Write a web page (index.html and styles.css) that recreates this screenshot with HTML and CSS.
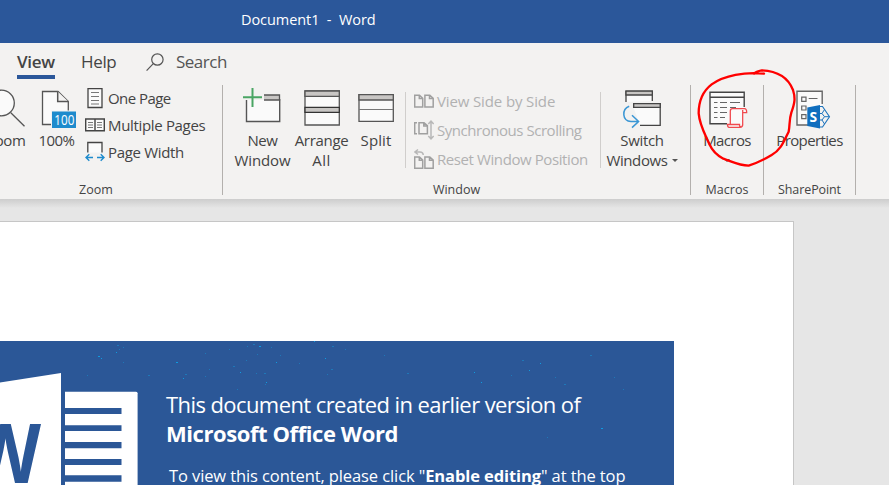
FILE: index.html
```
<!DOCTYPE html>
<html lang="en">
<head>
<meta charset="utf-8">
<title>Document1 - Word</title>
<link rel="stylesheet" href="styles.css">
</head>
<body>
<header class="titlebar"><span class="t title">Document1 &nbsp;-&nbsp; Word</span></header>

<nav class="tabs">
  <span class="tab active"><span class="t t-view">View</span></span>
  <span class="tab help"><span class="t t-help">Help</span></span>
  <span class="tab search">
    <svg width="20" height="22" viewBox="146 51 20 22" fill="none" stroke="#555" stroke-width="1.2"><circle cx="157.4" cy="60.5" r="5.7"/><path d="M153.3 64.7 146.6 71.7"/></svg>
    <span class="t t-search">Search</span>
  </span>
</nav>

<main class="ribbon">
  <section class="group g-zoom">
    <div class="tools">
      <div class="big b-zoom">
        <svg width="40" height="45" viewBox="-14 85 40 45" fill="none" stroke="#555" stroke-width="1.3"><circle cx="1.5" cy="103" r="12.8" fill="#fafafa"/><path d="M10.8 112.8 24.5 126.3"/></svg>
        <span class="t t-zoomb">Zoom</span>
      </div>
      <div class="big b-100">
        <svg width="57" height="45" viewBox="28 85 57 45"><path d="M42.5 91.5H58L68.3 101.5V124.5H42.5Z" fill="#fafafa" stroke="#555" stroke-width="1.3"/><path d="M57.7 91.5V101.5H68.3" fill="#f3f2f1" stroke="#555" stroke-width="1.5"/><rect x="51" y="110.5" width="25.5" height="18" fill="#f3f2f1"/><rect x="52" y="111.5" width="24" height="16.5" fill="#1e8bcd"/><text x="54.3" y="125" class="hundred" textLength="20" lengthAdjust="spacingAndGlyphs">100</text></svg>
        <span class="t t-100">100%</span>
      </div>
      <div class="list">
        <div class="row"><svg width="20" height="27" viewBox="85 84 20 27" fill="none" stroke="#444"><path d="M88 88.7H102V107.5H88Z" fill="#fafafa" stroke-width="1.3"/><path d="M91 92.5H99M91 96.5H99M91 100.5H99M91 104H99" stroke="#777"/></svg><span class="t t-one">One Page</span></div>
        <div class="row"><svg width="20" height="27" viewBox="85 111 20 27" fill="none" stroke="#444"><path d="M85.7 119H104.3V130.8H85.7ZM95 119V130.8" fill="#fafafa" stroke-width="1.4"/><path d="M88 122.5H93M88 125H93M88 127.5H93M97 122.5H102M97 125H102M97 127.5H102" stroke="#777"/></svg><span class="t t-multi">Multiple Pages</span></div>
        <div class="row"><svg width="20" height="27" viewBox="85 138 20 27" fill="none"><path d="M87.8 152.5V142.5H102V152.5" fill="#fafafa" stroke="#444" stroke-width="1.3"/><path d="M93 157.5H86M89.3 154.3 86 157.5 89.3 160.7M97 157.5H104M100.7 154.3 104 157.5 100.7 160.7" stroke="#1e8bcd" stroke-width="1.4"/></svg><span class="t t-pw">Page Width</span></div>
      </div>
    </div>
    <div class="caption c-zoom"><span class="t">Zoom</span></div>
  </section>

  <section class="group g-window">
    <div class="tools">
      <div class="big b-new">
        <svg width="59" height="45" viewBox="233 85 59 45" fill="none"><path d="M246.5 100V121.5H279.7V94.7H264V100Z" fill="#fafafa"/><path d="M264 95H279.5V100H264" fill="#c8c6c4" stroke="#555" stroke-width="1.3"/><path d="M246.5 100V121.5H279.7V99" stroke="#555" stroke-width="1.4"/><path d="M252.5 88V107M243 97.3H262" stroke="#4aa564" stroke-width="2"/></svg>
        <span class="t t-new">New</span><span class="t t-win">Window</span>
      </div>
      <div class="big b-arr">
        <svg width="59" height="45" viewBox="292 85 59 45" stroke="#555" stroke-width="1.3"><path d="M305 91H339.3V125H305Z" fill="#fafafa"/><path d="M305 91H339.3V96.3H305Z" fill="#c8c6c4"/><path d="M305 107.4H339.3V112.3H305Z" fill="#c8c6c4" stroke="#333"/></svg>
        <span class="t t-arr">Arrange</span><span class="t t-all">All</span>
      </div>
      <div class="big b-split">
        <svg width="50" height="45" viewBox="351 85 50 45" stroke="#555" stroke-width="1.3"><path d="M359 94.7H393.3V121.3H359Z" fill="#fafafa"/><path d="M359 94.7H393.3V100H359Z" fill="#c8c6c4"/><path d="M359 109.5H393" stroke="#777" stroke-width="1"/></svg>
        <span class="t t-split">Split</span>
      </div>
      <div class="rule r1"></div>
      <div class="list dim">
        <div class="row"><svg width="20" height="29" viewBox="414 86 20 29" fill="none" stroke="#a0a0a0" stroke-width="1.5"><path d="M414.7 95.3H419.5L422.7 98.3V107H414.7ZM419.3 95.3V98.6H422.7M424.9 95.3H429.8L433.2 98.3V107H424.9ZM429.5 95.3V98.6H433.2"/></svg><span class="t t-vs">View Side by Side</span></div>
        <div class="row"><svg width="20" height="29" viewBox="414 115 20 29" fill="none" stroke="#a0a0a0" stroke-width="1.5"><path d="M417 122.7H414.7V133.7H417M419 122.7H424L427.4 125.7V133.7H419ZM423.8 122.7V126H427.4"/><path d="M431 121.5V138.5M428.3 124 431 121.2 433.7 124M428.3 136 431 138.8 433.7 136" stroke="#b8b8b8"/></svg><span class="t t-ss">Synchronous Scrolling</span></div>
        <div class="row"><svg width="20" height="29" viewBox="414 144 20 29" fill="none" stroke="#a0a0a0" stroke-width="1.5"><path d="M414.7 157H419.5L422.7 160V168.2H414.7ZM419.3 157V160.3H422.7M424.9 157H429.8L433.2 160V168.2H424.9ZM429.5 157V160.3H433.2"/><path d="M418 149.5 415 152 418 154.5M415 152H420Q423 152 423.3 155" stroke="#b8b8b8"/></svg><span class="t t-rw">Reset Window Position</span></div>
      </div>
      <div class="rule"></div>
      <div class="big b-switch">
        <svg width="72" height="45" viewBox="606 85 72 45" fill="none" stroke="#444" stroke-width="1.3"><path d="M626 102V91.2H652.3V101" fill="#fafafa"/><path d="M626 91.2H652.3V95H626Z" fill="#c8c6c4"/><path d="M633.7 108V103.7H660.2V125.3H640" fill="#fafafa"/><path d="M633.7 103.7H660.2V107.4H633.7Z" fill="#c8c6c4"/><path d="M629.2 106.2C621.5 109 622 121.5 631 121.5H638.5M632 115.2 638.6 121.5 632 127.6" stroke="#3a96d4" stroke-width="1.5"/></svg>
        <span class="t t-sw">Switch</span><span class="line"><span class="t t-wins">Windows</span><i class="caret"></i></span>
      </div>
    </div>
    <div class="caption"><span class="t">Window</span></div>
  </section>

  <section class="group g-macros">
    <div class="tools">
      <div class="big b-full">
        <svg width="72" height="45" viewBox="691 85 72 45" fill="none"><path d="M710 92.2H744.2V123.7H710Z" fill="#fafafa"/><path d="M744.2 107V92.2H710V123.7H727M710 97.2H744.2" stroke="#444" stroke-width="1.4"/><path d="M714 102.5H717.5M720 102.5H727M730 102.5H740M714 107.5H717.5M720 107.5H727M714 112.5H717.5M720 112.5H727M730 107.5H736M714 117.5H717.5M720 117.5H725" stroke="#666"/><path d="M730.3 124.5V111Q730.3 108.7 732.5 108.7H744.5Q746.7 108.7 746.7 112.7H742.7V124.5Q742.7 127.3 740 127.3H729Q727.5 127.3 727.5 124.5H739.5Q739.5 127.3 741 127.3M742.7 112.7V110" fill="#fafafa" stroke="#f0494e" stroke-width="1.3"/></svg>
        <span class="t t-mac">Macros</span><span class="line"><i class="caret"></i></span>
      </div>
    </div>
    <div class="caption"><span class="t">Macros</span></div>
  </section>

  <section class="group g-share">
    <div class="tools">
      <div class="big b-full">
        <svg width="91" height="45" viewBox="764 85 91 45" fill="none"><path d="M822.2 104V91.3H797V125H808" fill="#fafafa" stroke="#666" stroke-width="1.4"/><path d="M801.7 97.2H806V101.3H801.7ZM801.7 106H806V110H801.7ZM801.7 114.7H806V118.7H801.7ZM808.7 98.5H817.5" stroke="#666" stroke-width="1.2"/><path d="M819 106.5H822.5L829.5 116.7 822.5 127H819" fill="#f3f2f1" stroke="#1e74bd" stroke-width="1.1"/><path d="M820 113.5H822L824.5 116.7 822 120H820M824.5 116.7H829M822 113.5 824.5 109.5M822 120 824.5 124" stroke="#1e74bd"/><path d="M807.3 107.5 820 105V128.5L807.3 126Z" fill="#0f6ebe"/><text x="809.6" y="122" class="sp" textLength="7.6" lengthAdjust="spacingAndGlyphs">S</text></svg>
        <span class="t t-prop">Properties</span>
      </div>
    </div>
    <div class="caption"><span class="t t-cs">SharePoint</span></div>
  </section>

  <svg class="ink" width="199" height="150" viewBox="0 0 597 450"><path d="M222 41C165 35 103 46 65 73C35 96 26 125 26 160C29 196 45 222 58 252C67 273 77 284 100 296C130 306 145 316 176 317C205 308 225 297 245 285C275 268 283 240 296 215C300 195 297 180 304 158C314 130 317 115 309 90C295 54 265 33 215 31Q198 34 192 41"/></svg>
</main>

<div class="canvas">
  <article class="page">
    <div class="banner">
      <svg class="specks" width="674" height="144" viewBox="0 341 674 144"><path class="bright" d="M98 356.5h2M101 358.5h1M176 362.5h2M116 352.5h1M183 378.5h1M259 346.5h2M276 362.5h1M240 372.5h1M266 382.5h1M314 341.5h1M325 358.5h1M474 372.5h1M481 382.5h1M540 363.5h1M601 428.5h2M529 370.5h1"/><path d="M117 345.5h2M123 347.5h1M119 349.5h1M123 362.5h1M87 375.5h1M148 375.5h2M205 353.5h1M229 349.5h1M185 374.5h2M205 376.5h1M209 369.5h1M233 366.5h2M237 389.5h1M247 346.5h1M253 344.5h2M271 347.5h1M257 354.5h1M280 355.5h1M246 360.5h1M256 373.5h1M264 373.5h2M265 384.5h1M299 363.5h1M332 346.5h2M345 349.5h1M331 369.5h2M327 374.5h1M384 355.5h1M407 373.5h2M511 375.5h1M522 360.5h2M555 377.5h1M564 384.5h2M590 355.5h2M614 377.5h1M623 389.5h1M547 437.5h1"/></svg>
      <svg class="logo" width="166" height="144" viewBox="0 341 166 144"><path d="M0 382.5 61 373V485H0Z" fill="#fff"/><text x="-30" y="483" class="w" textLength="71" lengthAdjust="spacingAndGlyphs">W</text><path d="M65 391.7H136Q137.6 391.7 137.6 393.3V485H65Z" fill="#fff"/><path d="M65 408H121.5V414H65ZM65 425.3H121.5V431H65ZM65 442H121.5V448.3H65ZM65 459H121.5V465H65ZM65 475.3H121.5V481.7H65Z" fill="#2b5797"/></svg>
      <div class="copy">
        <p class="lead"><span class="t t-b1">This document created in earlier version of</span></p>
        <p class="lead strong"><span class="t t-b2">Microsoft Office Word</span></p>
        <p class="note"><span class="t t-b3">To view this content, please click "<b>Enable editing</b>" at the top</span></p>
      </div>
    </div>
  </article>
</div>
</body>
</html>
```
FILE: styles.css
```
* { box-sizing: border-box; }
body { margin: 0; width: 889px; height: 485px; overflow: hidden; background: #e6e6e6; color: #444; font: 15px/20px "Open Sans", "Noto Sans", sans-serif; }
.t { white-space: nowrap; }
svg { display: block; flex: none; }

.titlebar { height: 43px; padding: 10px 0 0 241px; background: #2b579a; color: #fff; font-size: 14.5px; }
.tabs { height: 42px; display: flex; background: #f3f2f1; font-size: 17px; line-height: 24px; }
.tab { height: 36px; padding-top: 7px; }
.active { margin-left: 17px; width: 38px; border-bottom: 4px solid #2b579a; font-weight: 600; }
.help { margin-left: 26px; width: 65px; }
.search { display: flex; gap: 10px; color: #555; }

.ribbon { position: relative; display: flex; height: 114px; background: #f3f2f1; }
.group { height: 110px; border-right: 1px solid #b3b0ad; display: flex; flex-direction: column; }
.g-zoom { width: 223px; }
.g-window { width: 468px; }
.g-macros { width: 73px; }
.g-share { width: 92px; }
.tools { display: flex; height: 95px; }
.caption { margin-top: 0; font-size: 12.5px; line-height: 18px; text-align: center; padding-top: 0; }
.group .tools { height: 95px; flex: none; }
.group .caption { padding-top: 1px; height: 15px; line-height: 17px; }
.c-zoom { padding-right: 30px; }
.big { flex: none; display: flex; flex-direction: column; align-items: center; }
.line { display: flex; align-items: center; gap: 4px; height: 20px; }
.caret { border: 3px solid transparent; border-top-color: #555; border-bottom: 0; }
.b-zoom { width: 40px; margin-left: -14px; }
.b-100 { width: 57px; margin-left: 2px; }
.b-new { width: 59px; margin-left: 10px; }
.b-arr { width: 59px; }
.b-split { width: 50px; }
.b-switch { width: 72px; margin-left: 5px; }
.b-full { width: 100%; }
.list { margin-top: -1px; }
.row { display: flex; align-items: center; gap: 3px; }
.dim { width: 186px; margin: 1px 0 0 8px; color: #b1b1b1; }
.rule { width: 1px; height: 76px; margin-top: 7px; background: #d0cecc; }
.r1 { margin-left: 4px; }
.hundred { font-size: 14.5px; fill: #fff; }
.sp { font-size: 15px; font-weight: 700; fill: #fff; }
.ink { position: absolute; left: 690px; top: -25px; fill: none; stroke: #f00; stroke-width: 7; stroke-linecap: round; }

.canvas { height: 286px; padding-top: 22px; background: linear-gradient(#cdcdcd, #e6e6e6 9px); }
.page { width: 794px; height: 264px; padding-top: 119px; background: #fff; border: solid #c6c6c6; border-width: 1px 1px 0 0; }
.banner { position: relative; display: flex; width: 674px; height: 144px; background: #2b5797; color: #fff; }
.specks { position: absolute; left: 0; top: 0; stroke: #1f78b8; }
.bright { stroke: #109be0; }
.w { font-size: 82px; font-weight: 700; fill: #2b5797; }
.copy { padding-top: 49px; }
.lead { margin: 0; font-size: 22px; line-height: 29px; }
.strong { font-weight: 700; }
.note { margin: 17px 0 0 3px; font-size: 16.5px; line-height: 22px; }

/* Tracking per label */
.title { letter-spacing: -.06px; }
.t-view { letter-spacing: -.3px; }
.t-help { letter-spacing: -.35px; }
.t-search { letter-spacing: -.5px; }
.t-zoomb { letter-spacing: -.38px; }
.t-100 { letter-spacing: -.54px; }
.t-one { letter-spacing: -.56px; }
.t-multi { letter-spacing: -.33px; }
.t-pw { letter-spacing: -.32px; }
.t-new { letter-spacing: -.45px; }
.t-win { letter-spacing: -.15px; }
.t-arr { letter-spacing: -.3px; }
.t-all { letter-spacing: .4px; }
.t-split { letter-spacing: .1px; }
.t-vs { letter-spacing: -.13px; }
.t-ss { letter-spacing: -.46px; }
.t-rw { letter-spacing: -.41px; }
.t-sw { letter-spacing: -.35px; }
.t-wins { letter-spacing: -.38px; }
.t-mac { letter-spacing: -.6px; }
.t-prop { letter-spacing: -.62px; }
.t-cs { letter-spacing: -.1px; }
.t-b1 { letter-spacing: -.58px; }
.t-b2 { letter-spacing: -.42px; }
.t-b3 { letter-spacing: -.1px; }
```
